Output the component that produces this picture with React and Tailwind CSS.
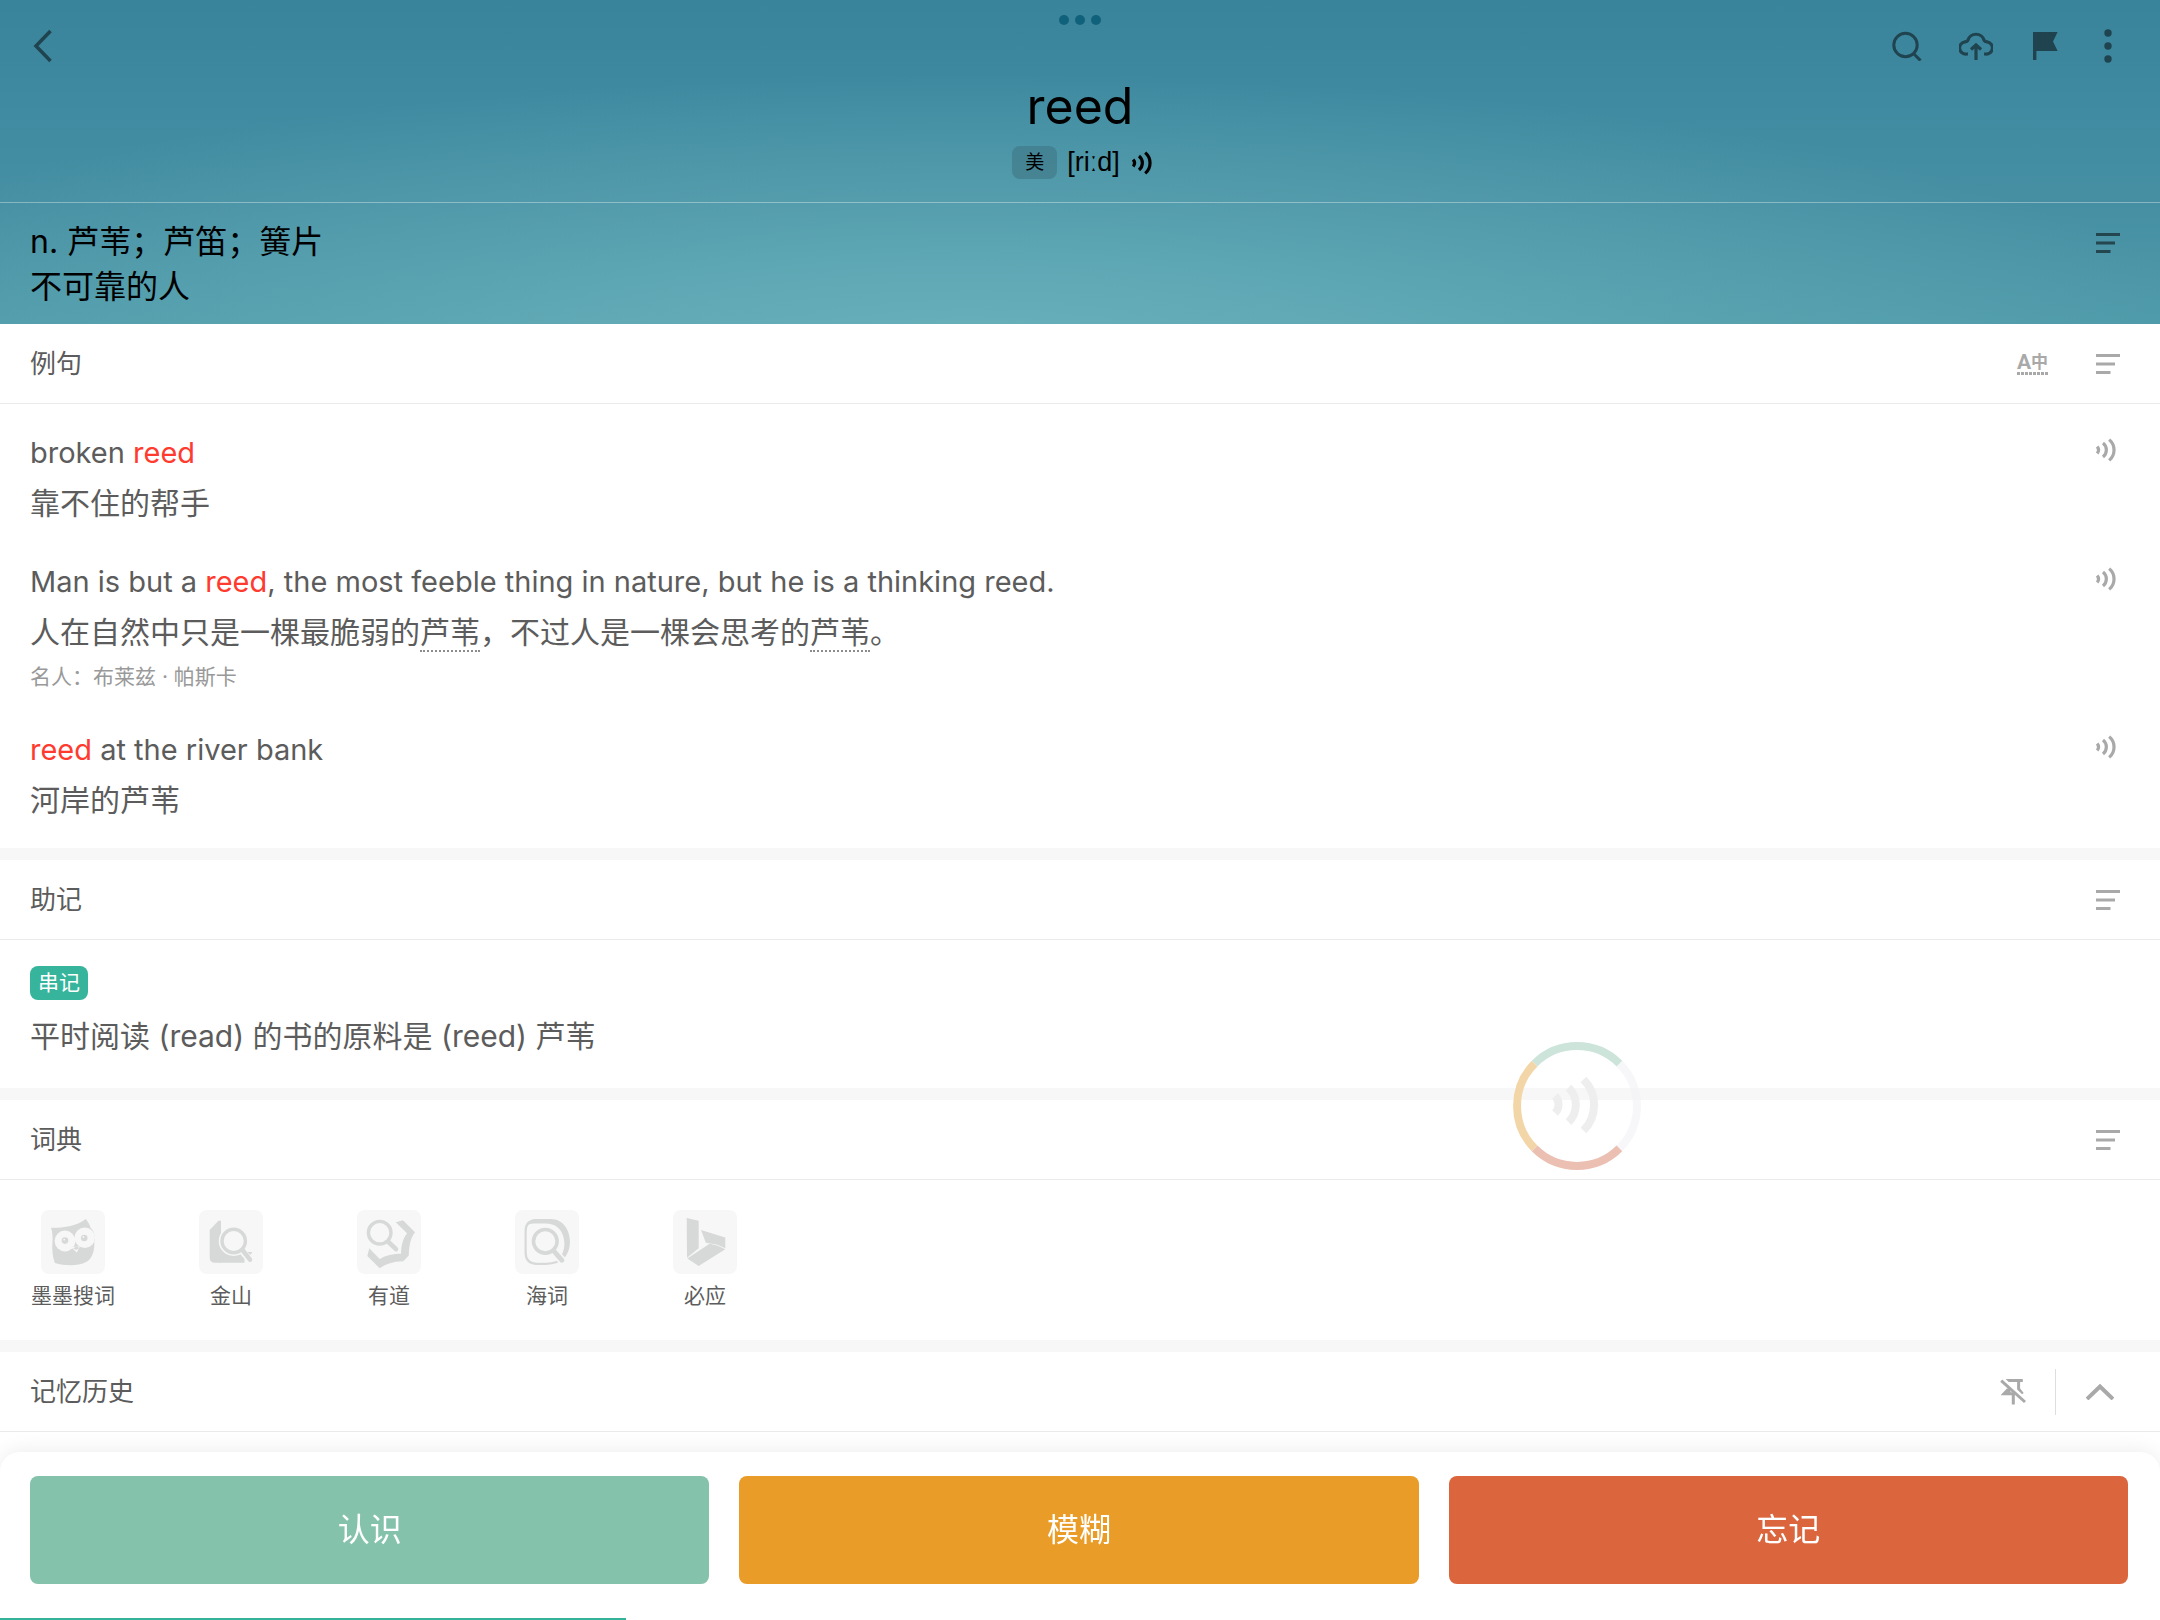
import React from "react";

function MenuLines() {
  return (
    <svg width="24" height="20" viewBox="0 0 24 20" fill="currentColor" aria-hidden="true">
      <rect x="0" y="0" width="24" height="3" />
      <rect x="0" y="8.5" width="19" height="3" />
      <rect x="0" y="17" width="14.5" height="3" />
    </svg>
  );
}

function Waves() {
  return (
    <svg width="20" height="24" viewBox="0 0 20 24" fill="none" stroke="currentColor" strokeWidth="3.2" aria-hidden="true">
      <path d="M1.2 8.6a5.4 5.4 0 0 1 0 6.8" />
      <path d="M7 5a9 9 0 0 1 0 14" />
      <path d="M13.2 1.6a13.6 13.6 0 0 1 0 20.8" />
    </svg>
  );
}

function IconButton({ label, className = "", children }) {
  return (
    <button type="button" aria-label={label} className={`flex shrink-0 cursor-pointer items-center justify-center ${className}`}>
      {children}
    </button>
  );
}

function SectionHeader({ title, children }) {
  return (
    <div className="flex h-[80px] items-center justify-between border-b border-[#ebebeb] pr-10 pl-[30px]">
      <h2 className="text-[26px] leading-9 text-[#5c5c5c]">{title}</h2>
      <div className="flex items-center text-[#a9a9a9]">{children}</div>
    </div>
  );
}

function Em({ children }) {
  return <span className="text-[#ff3b30]">{children}</span>;
}

function Dotted({ children }) {
  return <span className="border-b-2 border-dotted border-[#8c8c8c]">{children}</span>;
}

function Example({ en, zh, source }) {
  return (
    <li className="flex items-start justify-between pr-11 pl-[30px]">
      <div>
        <p className="text-[29px] leading-[51px]">{en}</p>
        <p className="text-[30px] leading-[51px]">{zh}</p>
        {source && <p className="pb-0.5 text-[21px] leading-[37px] text-[#999999]">{source}</p>}
      </div>
      <IconButton label="播放例句" className="h-[46px] text-[#a9a9a9]">
        <Waves />
      </IconButton>
    </li>
  );
}

const GLYPH = "#d7d9d8";
const TILE = "#f7f7f7";

function OwlIcon() {
  return (
    <svg width="64" height="64" viewBox="0 0 64 64" aria-hidden="true">
      <path fill={GLYPH} d="M10 17.8C22 18 36 16 44.8 9C47 12 49 15 49.6 18C54 22 54.500 28 53.400 32C53.500 44 50 50 44 52.600C37 56 24 56 13.800 53C11.500 46 11 40 11.300 34C12 28 11.500 22 10 17.800Z" />
      <circle cx="24" cy="31" r="10.400" fill={TILE} />
      <circle cx="43.800" cy="27.800" r="10.200" fill={TILE} />
      <path fill={TILE} d="M30.500 37.500L35 36.500L39 36.500L35.800 42.500Z" />
      <path fill={GLYPH} d="M32.300 38.800L35.200 36.200L38.500 38L35.600 39.800Z" />
      <circle cx="24" cy="30.600" r="3.300" fill={GLYPH} />
      <circle cx="43.200" cy="28" r="3.300" fill={GLYPH} />
      <circle cx="23.200" cy="29.600" r="0.900" fill={TILE} />
      <circle cx="42.400" cy="27" r="0.900" fill={TILE} />
    </svg>
  );
}

function JinshanIcon() {
  return (
    <svg width="64" height="64" viewBox="0 0 64 64" aria-hidden="true">
      <path fill={GLYPH} d="M10.700 20L19.400 10.700H22V52.800H16Q10.700 52.800 10.700 47.500Z" />
      <path fill={GLYPH} d="M20 30V52.800H45.500V49L38 40Z" />
      <circle cx="34.700" cy="31" r="15" fill={TILE} />
      <path d="M45 41L54 51" stroke={TILE} strokeWidth="9" />
      <circle cx="34.700" cy="31" r="11.700" fill="none" stroke={GLYPH} strokeWidth="3.400" />
      <path d="M43.500 40L51 49.600" stroke={GLYPH} strokeWidth="4.600" strokeLinecap="round" />
      <path fill={GLYPH} d="M48.500 42H53.300L51.500 45Z" />
    </svg>
  );
}

function YoudaoIcon() {
  return (
    <svg width="64" height="64" viewBox="0 0 64 64" aria-hidden="true">
      <circle cx="22.700" cy="22.700" r="11.300" fill="none" stroke={GLYPH} strokeWidth="3.400" />
      <path d="M31.500 32L39 39.200" stroke={GLYPH} strokeWidth="4.600" strokeLinecap="round" />
      <path fill={GLYPH} d="M38.700 12.300L46 10.300L58 22.300C53 29 52 37 51.800 45.500L46.300 51.300C36 51.500 29 54 22.700 58.300L10.300 46L12.300 38.300L22.700 49C29 45 36 43.800 44 43.700C44.200 36 45.500 29 50 23.300Z" />
    </svg>
  );
}

function HaiciIcon() {
  return (
    <svg width="64" height="64" viewBox="0 0 64 64" aria-hidden="true">
      <path d="M42.500 51.800Q37 53.800 31 53.800H22Q10.600 53.800 10.600 42.500V21Q10.600 11 20 10.600" fill="none" stroke={GLYPH} strokeWidth="2.200" />
      <path fill={GLYPH} d="M11 17Q13 9 20.500 9H36C48 9 55 20 55 32C55 38 53 43 50 47.400L47 44.200C48.800 41 49.600 36 49.300 32C48.500 22 43 13.600 31 13.600H19Q13.500 13.600 11 17Z" />
      <circle cx="30.300" cy="31.300" r="11.800" fill="none" stroke={GLYPH} strokeWidth="3.600" />
      <path d="M38.700 40.800L47 50.300" stroke={GLYPH} strokeWidth="4.800" strokeLinecap="round" />
    </svg>
  );
}

function BingIcon() {
  return (
    <svg width="64" height="64" viewBox="0 0 64 64" fill={GLYPH} aria-hidden="true">
      <path d="M13.700 8L25.700 10.700V38.300L14 47.800Z" />
      <path d="M28 20L52.300 27.500V38.300L44.500 34.800L32.800 32.700Z" />
      <path d="M14.300 48.400L36.500 33.800L45 35.800L52.300 39.300L25.700 56Z" />
    </svg>
  );
}

const dictionaries = [
  { name: "墨墨搜词", Icon: OwlIcon },
  { name: "金山", Icon: JinshanIcon },
  { name: "有道", Icon: YoudaoIcon },
  { name: "海词", Icon: HaiciIcon },
  { name: "必应", Icon: BingIcon },
];

function Header() {
  return (
    <header className="relative bg-[radial-gradient(ellipse_58%_85%_at_45%_108%,#69b1bb_0%,#69b1bb80_45%,#69b1bb00_100%),linear-gradient(180deg,#39839b_0%,#408ba1_35%,#468fa3_62%,#4f9aaa_100%)]">
      <div className="absolute top-[15px] left-1/2 flex -translate-x-1/2 gap-1.5" aria-hidden="true">
        <span className="size-2.5 rounded-full bg-[#10627c]" />
        <span className="size-2.5 rounded-full bg-[#10627c]" />
        <span className="size-2.5 rounded-full bg-[#10627c]" />
      </div>

      <nav className="flex h-[76px] items-center justify-between pt-4 pr-12 pl-8 text-[#1f444f]">
        <IconButton label="返回">
          <svg width="20" height="34" viewBox="0 0 20 34" fill="none" stroke="currentColor" strokeWidth="3.5">
            <path d="M18.500 2L4 17L18.500 32" />
          </svg>
        </IconButton>
        <div className="flex items-center">
          <IconButton label="搜索" className="mr-[37px]">
            <svg width="30" height="30" viewBox="0 0 30 30" fill="none" stroke="currentColor" strokeWidth="3">
              <circle cx="13.500" cy="14" r="11.700" />
              <path d="M21.500 22.500L28.500 29.500" />
            </svg>
          </IconButton>
          <IconButton label="上传" className="mr-10">
            <svg width="34" height="30" viewBox="0 0 34 30" fill="none" stroke="currentColor" strokeWidth="3.2">
              <path d="M9 23H7.500A5.900 5.900 0 0 1 6 10.800Q8.300 10.500 8.800 9.500A8.500 8.500 0 0 1 25.200 9.500Q25.700 10.500 28 10.800A5.900 5.900 0 0 1 26.500 23H25" />
              <path d="M17 29V15M12 18.500L17 14L22 18.500" />
            </svg>
          </IconButton>
          <IconButton label="标记" className="mr-[46px]">
            <svg width="25" height="28" viewBox="0 0 25 28" fill="currentColor">
              <path d="M0 0H24.600L20 9.500L24.600 19H3.400V28H0Z" />
            </svg>
          </IconButton>
          <IconButton label="更多">
            <svg width="8" height="34" viewBox="0 0 8 34" fill="currentColor">
              <circle cx="4" cy="4" r="3.700" />
              <circle cx="4" cy="17" r="3.700" />
              <circle cx="4" cy="30" r="3.700" />
            </svg>
          </IconButton>
        </div>
      </nav>

      <h1 className="text-center text-[50px] leading-[60px] text-black">reed</h1>
      <div className="flex items-center justify-center border-b border-white/35 pt-2.5 pb-[23px] pl-1 text-black">
        <button type="button" className="h-[33px] w-[45px] rounded-lg bg-[#3f7786]/60 text-[19px] leading-[33px]">美</button>
        <span className="mr-3 ml-2.5 font-['Liberation_Sans','Noto_Sans',sans-serif] text-[27px] leading-[33px]">[riːd]</span>
        <IconButton label="播放发音">
          <Waves />
        </IconButton>
      </div>

      <div className="flex items-start justify-between pt-4 pr-10 pb-[15px] pl-[30px]">
        <p className="text-[32px] leading-[45px] text-black">
          n. 芦苇；芦笛；簧片
          <br />
          不可靠的人
        </p>
        <IconButton label="释义选项" className="h-12 text-[#24474f]">
          <MenuLines />
        </IconButton>
      </div>
    </header>
  );
}

function FloatingPlayer() {
  return (
    <button type="button" aria-label="朗读" className="absolute top-[1042px] right-[519px] size-32 cursor-pointer rounded-full">
      <svg width="128" height="128" viewBox="0 0 128 128" fill="none" strokeWidth="8">
        <path stroke="#f1f2f7" strokeOpacity="0.6" d="M106.400 21.600A60 60 0 0 1 106.400 106.400" />
        <path stroke="#cce4da" d="M21.600 21.600A60 60 0 0 1 106.400 21.600" />
        <path stroke="#ebbfb1" d="M106.400 106.400A60 60 0 0 1 21.600 106.400" />
        <path stroke="#f3d6a8" d="M21.600 106.400A60 60 0 0 1 21.600 21.600" />
        <g stroke="#eeeeee">
          <path d="M42 54A12 12 0 0 1 42 71" />
          <path d="M55.500 45.500A24 24 0 0 1 55.500 80" />
          <path d="M70.500 37.500A36 36 0 0 1 70.500 88.500" />
        </g>
      </svg>
    </button>
  );
}

function AnswerBar() {
  return (
    <footer className="fixed inset-x-0 bottom-0 rounded-t-[20px] bg-white pt-6 pr-8 pb-9 pl-[30px] shadow-[0_-2px_20px_rgba(0,0,0,0.07)]">
      <div className="grid grid-cols-3 gap-[30px] text-[32px] text-white">
        <button type="button" className="h-[108px] cursor-pointer rounded-lg bg-[#84c2ab]">认识</button>
        <button type="button" className="h-[108px] cursor-pointer rounded-lg bg-[#e99c27]">模糊</button>
        <button type="button" className="h-[108px] cursor-pointer rounded-lg bg-[#db663e]">忘记</button>
      </div>
      <div className="absolute bottom-0 left-0 h-0.5 w-[29%] bg-[#34b29a]" />
    </footer>
  );
}

export default function App() {
  return (
    <div className="relative h-screen overflow-hidden bg-white font-['Inter','Noto_Sans_CJK_SC',sans-serif] text-[#5c5c5c]" lang="zh-CN">
      <Header />
      <main>
        <section>
          <SectionHeader title="例句">
            <button
              type="button"
              aria-label="翻译显示"
              className="mr-12 flex cursor-pointer flex-col font-['Roboto','Noto_Sans_CJK_SC',sans-serif] font-bold"
            >
              <span className="flex items-center leading-5">
                <span className="text-[21px]">A</span>
                <span className="text-[17px]">中</span>
              </span>
              <span className="h-[3px] w-full bg-[repeating-linear-gradient(90deg,#a9a9a9_0px,#a9a9a9_3px,transparent_3px,transparent_4px)]" />
            </button>
            <IconButton label="例句选项">
              <MenuLines />
            </IconButton>
          </SectionHeader>
          <ul className="flex flex-col gap-[27px] pt-[23px] pb-[22px]">
            <Example en={<>broken <Em>reed</Em></>} zh="靠不住的帮手" />
            <Example
              en={<>Man is but a <Em>reed</Em>, the most feeble thing in nature, but he is a thinking reed.</>}
              zh={<>人在自然中只是一棵最脆弱的<Dotted>芦苇</Dotted>，不过人是一棵会思考的<Dotted>芦苇</Dotted>。</>}
              source="名人：布莱兹 · 帕斯卡"
            />
            <Example en={<><Em>reed</Em> at the river bank</>} zh="河岸的芦苇" />
          </ul>
        </section>

        <section className="border-t-12 border-[#f7f7f7]">
          <SectionHeader title="助记">
            <IconButton label="助记选项">
              <MenuLines />
            </IconButton>
          </SectionHeader>
          <div className="px-[30px] pt-[26px] pb-[26px]">
            <div className="flex">
              <span className="h-[34px] rounded-lg bg-[#36b49c] px-2 text-[21px] leading-[34px] text-white">串记</span>
            </div>
            <p className="mt-[11px] text-[30px] leading-[51px]">平时阅读 (read) 的书的原料是 (reed) 芦苇</p>
          </div>
        </section>

        <section className="border-t-12 border-[#f7f7f7]">
          <SectionHeader title="词典">
            <IconButton label="词典选项">
              <MenuLines />
            </IconButton>
          </SectionHeader>
          <ul className="flex gap-[72px] px-[30px] py-[30px]">
            {dictionaries.map(({ name, Icon }) => (
              <li key={name}>
                <a href="#" className="flex w-[86px] flex-col items-center">
                  <span className="size-16 overflow-hidden rounded-lg bg-[#f7f7f7]">
                    <Icon />
                  </span>
                  <span className="pt-2 text-[21px] leading-7 whitespace-nowrap">{name}</span>
                </a>
              </li>
            ))}
          </ul>
        </section>

        <section className="border-t-12 border-[#f7f7f7]">
          <SectionHeader title="记忆历史">
            <IconButton label="取消固定">
              <svg width="26" height="28" viewBox="0 0 26 28" fill="none" stroke="currentColor" strokeWidth="3">
                <path d="M6 2.500H22.800" />
                <path d="M18.600 2.500V11L22.500 16" />
                <path d="M8 11.500L4 15.800H15" />
                <path d="M9 10V15M13.300 15V26.500" />
                <path d="M3.500 0.500L26 21" stroke="#ffffff" strokeWidth="2" />
                <path d="M1.200 2.700L25 24" />
              </svg>
            </IconButton>
            <span className="ml-[29px] h-[46px] w-px bg-[#dedede]" />
            <IconButton label="收起" className="mr-1.5 ml-[30px]">
              <svg width="28" height="16" viewBox="0 0 28 16" fill="none" stroke="currentColor" strokeWidth="4">
                <path d="M1 15L14 2.500L27 15" />
              </svg>
            </IconButton>
          </SectionHeader>
        </section>
      </main>
      <FloatingPlayer />
      <AnswerBar />
    </div>
  );
}
